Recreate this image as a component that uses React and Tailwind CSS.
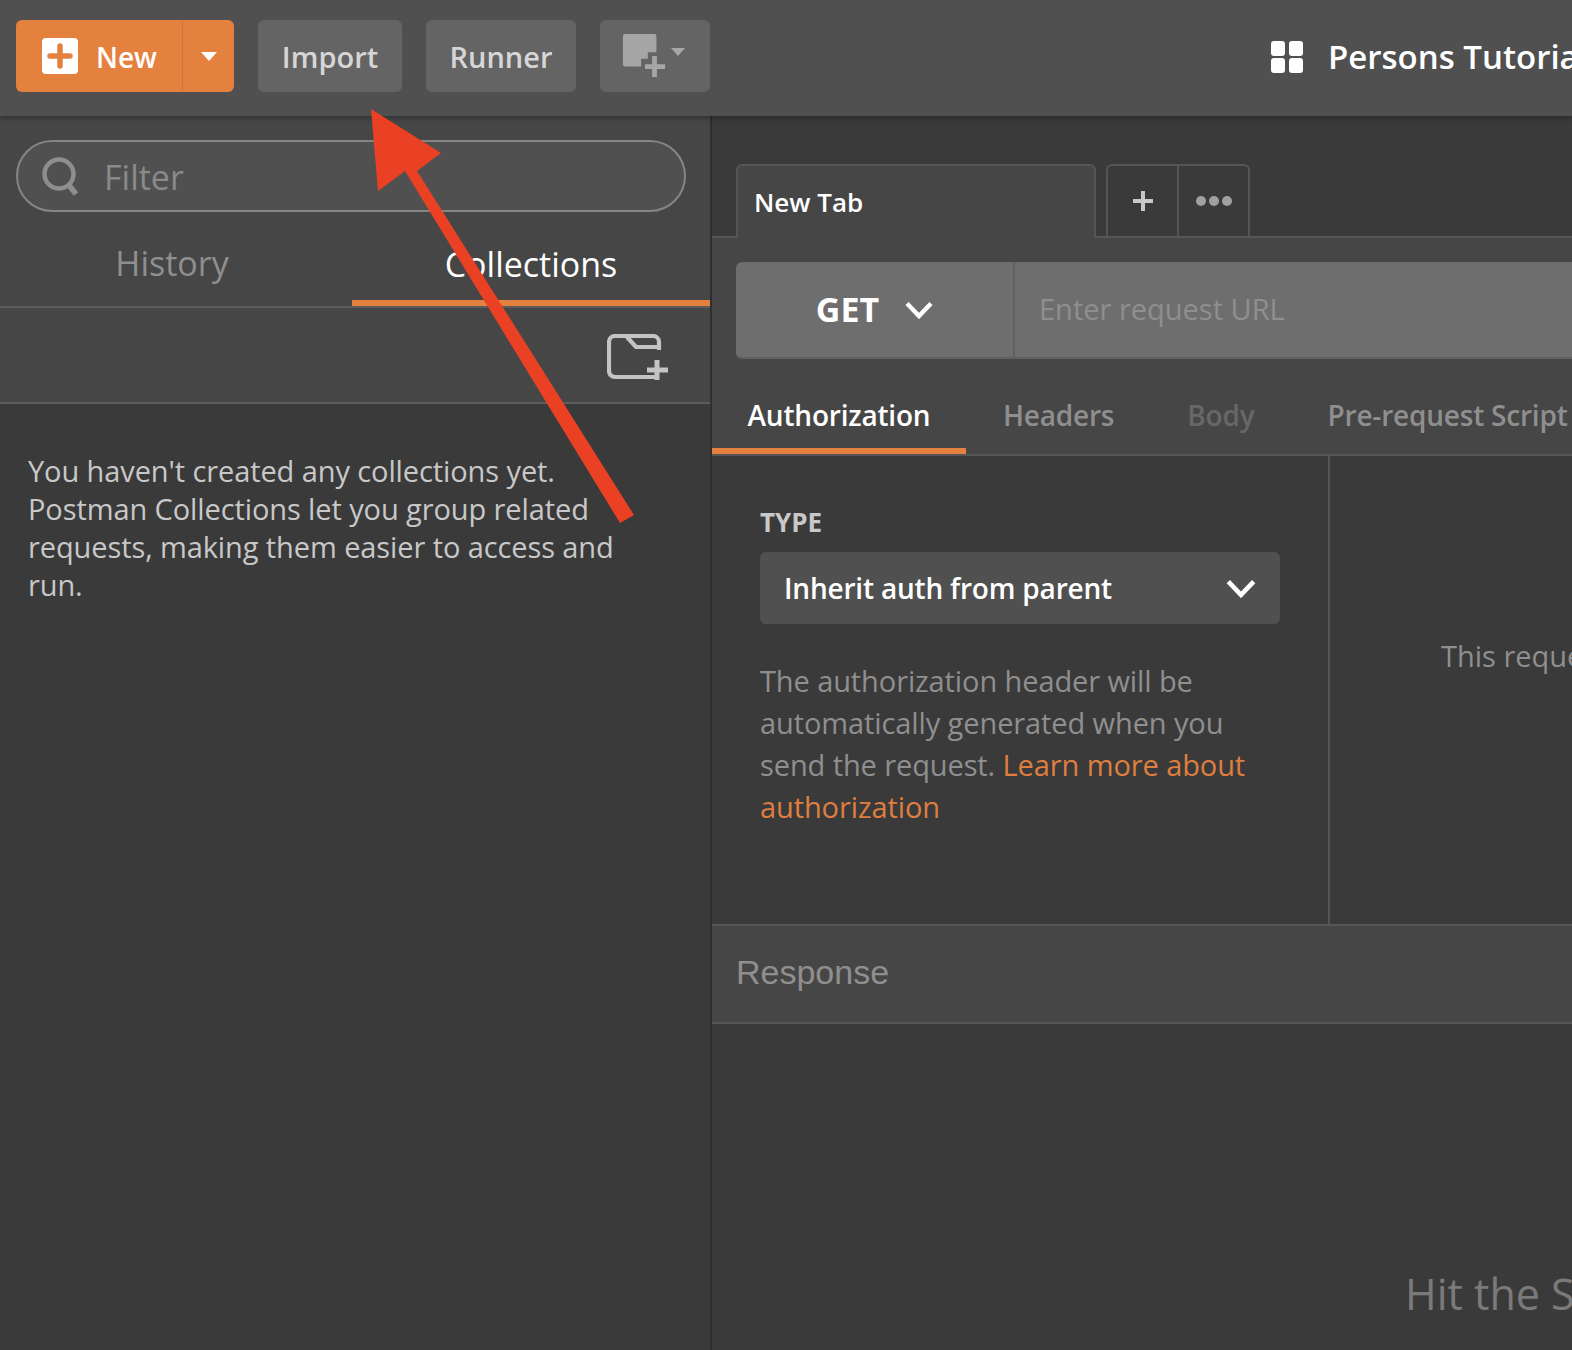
const sans = "font-['Open_Sans',sans-serif]";

const Chevron = ({ className }) => (
  <svg viewBox="0 0 28 18" fill="none" stroke="currentColor" strokeWidth="4.4" className={className}>
    <path d="M2 2.5 14 15 26 2.5" />
  </svg>
);

const Caret = ({ className }) => (
  <svg viewBox="0 0 16 9" fill="currentColor" className={className}>
    <path d="M0 0h16L8 9z" />
  </svg>
);

const PlusBox = () => (
  <svg viewBox="0 0 36 36" className="w-9 h-9">
    <rect width="36" height="36" rx="4" fill="#fff" />
    <path d="M18 8v20M8 18h20" stroke="#e5813f" strokeWidth="5.5" strokeLinecap="round" />
  </svg>
);

const NewWindowIcon = () => (
  <svg viewBox="0 0 46 46" className="w-[44px] h-[44px]">
    <path d="M1 2a2 2 0 0 1 2-2h31a2 2 0 0 1 2 2v17h-9v7h-7v8H3a2 2 0 0 1-2-2z" fill="#a6a6a6" />
    <path d="M34 23v22M24 34h21" stroke="#a6a6a6" strokeWidth="5" />
  </svg>
);

const FolderPlus = () => (
  <svg viewBox="0 0 62 46" fill="none" stroke="#c4c4c4" className="w-[62px] h-[46px]">
    <path d="M50 43H8a6 6 0 0 1-6-6V8a6 6 0 0 1 6-6h38a6 6 0 0 1 6 6v8" strokeWidth="4.2" />
    <path d="M20 3l9 10h22" strokeWidth="4.2" />
    <path d="M50 26v20M40 36h21" strokeWidth="5" />
  </svg>
);

const SearchIcon = () => (
  <svg viewBox="0 0 40 40" fill="none" stroke="#8e8e8e" className="w-10 h-10">
    <circle cx="18" cy="18" r="14.5" strokeWidth="4.5" />
    <path d="M27 28l8 10" strokeWidth="5.5" />
  </svg>
);

const WorkspaceIcon = () => (
  <div className="grid grid-cols-2 gap-x-1 gap-y-[2px] w-8 shrink-0">
    <span className="h-[15px] rounded-[3px] bg-white" />
    <span className="h-[15px] rounded-[3px] bg-white" />
    <span className="h-[15px] rounded-[3px] bg-white" />
    <span className="h-[15px] rounded-[3px] bg-white" />
  </div>
);

function ToolButton({ children, className = "" }) {
  return (
    <div className={`h-[72px] shrink-0 rounded-md bg-[#646464] flex items-center justify-center text-[29px] font-semibold text-[#d6d6d6] ${className}`}>
      {children}
    </div>
  );
}

function Header() {
  return (
    <header className="relative z-10 h-[116px] shrink-0 bg-[#505050] flex items-center pl-4 pb-1 overflow-hidden shadow-[0_2px_5px_rgba(0,0,0,0.3)]">
      <div className="w-[218px] h-[72px] rounded-md bg-[#e5813f] flex text-white shrink-0">
        <div className="w-[167px] pl-[26px] flex items-center gap-[18px] border-r border-[#d3743a]">
          <PlusBox />
          <span className="text-[28px] font-semibold pt-0.5">New</span>
        </div>
        <div className="flex-1 flex items-center justify-center">
          <Caret className="w-4 h-[9px]" />
        </div>
      </div>
      <ToolButton className="w-[144px] ml-6 pt-0.5">Import</ToolButton>
      <ToolButton className="w-[150px] ml-6 pt-0.5">Runner</ToolButton>
      <ToolButton className="w-[110px] ml-6 gap-[5px] items-start pt-[14px] pr-1">
        <NewWindowIcon />
        <Caret className="w-[14px] h-2 mt-[14px] text-[#a6a6a6]" />
      </ToolButton>
      <div className="ml-[561px] mt-0.5 flex items-center gap-[25px] shrink-0">
        <WorkspaceIcon />
        <span className="text-[33px] font-semibold text-white whitespace-nowrap">Persons Tutorial</span>
      </div>
    </header>
  );
}

function Sidebar() {
  return (
    <aside className="w-[712px] shrink-0 flex flex-col border-r-2 border-[#2f2f2f] bg-[#3a3a3a]">
      <div className="bg-[#464646]">
        <div className="pl-4 pr-6 pt-6">
          <div className="h-[72px] rounded-full border-2 border-[#858585] bg-[#505050] flex items-center pl-[23px] gap-[23px]">
            <SearchIcon />
            <span className="text-[34px] text-[#8a8a8a] pt-0.5">Filter</span>
          </div>
        </div>
        <div className="flex h-[96px] border-b-2 border-[#5c5c5c]">
          <div className="w-[352px] flex items-center justify-center text-[34px] text-[#8f8f8f] pt-2 pr-2">History</div>
          <div className="w-[358px] flex items-center justify-center text-[34px] text-white border-b-[6px] border-[#e5813f] pt-[16px]">Collections</div>
        </div>
        <div className="h-[96px] flex items-center justify-end pr-[41px] pt-1 border-b-2 border-[#5c5c5c]">
          <FolderPlus />
        </div>
      </div>
      <p className="pl-7 pr-[90px] pt-[48px] text-[29px] leading-[38px] tracking-[-0.1px] text-[#c8c8c8]">
        You haven't created any collections yet. Postman Collections let you group related requests, making them easier to access and run.
      </p>
    </aside>
  );
}

function TabStrip() {
  return (
    <div className="h-[122px] shrink-0 bg-[#3a3a3a] flex items-end pl-6 border-b-2 border-[#555555]">
      <div className="w-[360px] h-[74px] -mb-0.5 rounded-t-md border-2 border-b-0 border-[#555555] bg-[#464646] flex items-center pl-4 text-[26px] font-semibold text-white">
        New Tab
      </div>
      <div className="ml-[10px] h-[72px] flex rounded-t-md border-2 border-b-0 border-[#555555] text-[#c8c8c8]">
        <div className="w-[71px] flex items-center justify-center border-r-2 border-[#555555]">
          <svg viewBox="0 0 20 20" className="w-5 h-5"><path d="M10 0v20M0 10h20" stroke="#c8c8c8" strokeWidth="4" /></svg>
        </div>
        <div className="w-[69px] flex items-center justify-center gap-[3px]">
          <span className="w-[10px] h-[10px] rounded-full bg-[#a0a0a0]" />
          <span className="w-[10px] h-[10px] rounded-full bg-[#a0a0a0]" />
          <span className="w-[10px] h-[10px] rounded-full bg-[#a0a0a0]" />
        </div>
      </div>
    </div>
  );
}

function RequestBar() {
  return (
    <div className="pl-6 pt-[24px] pb-[22px]">
      <div className="h-[97px] w-[1000px] rounded-md bg-[#6e6e6e] flex border-b-2 border-[#606060]">
        <div className="w-[279px] flex items-center justify-center gap-[26px] border-r-2 border-[#606060] text-white">
          <span className="text-[34px] font-bold">GET</span>
          <Chevron className="w-[28px] h-[18px]" />
        </div>
        <div className="flex items-center pl-[24px] pb-0.5 text-[29px] text-[#8f8f8f]">Enter request URL</div>
      </div>
    </div>
  );
}

function RequestTabs() {
  return (
    <div className="h-[75px] shrink-0 flex items-stretch border-b-2 border-[#555555] text-[28px] font-semibold tracking-[-0.2px] whitespace-nowrap">
      <div className="w-[254px] shrink-0 flex items-center justify-center text-white border-b-[6px] border-[#e5813f]">Authorization</div>
      <div className="ml-[37px] flex items-center text-[#8f8f8f] pb-1.5">Headers</div>
      <div className="ml-[73px] flex items-center text-[#676767] pb-1.5">Body</div>
      <div className="ml-[73px] flex items-center text-[#8f8f8f] pb-1.5">Pre-request Script</div>
    </div>
  );
}

function AuthPanel() {
  return (
    <div className="h-[470px] shrink-0 flex bg-[#3a3a3a] border-b-2 border-[#555555]">
      <div className="w-[618px] shrink-0 pl-12 pr-12 pt-[50px] border-r-2 border-[#555555]">
        <div className="text-[26px] font-bold text-[#c8c8c8] leading-[32px]">TYPE</div>
        <div className="mt-[14px] h-[72px] w-[520px] rounded-md bg-[#505050] flex items-center justify-between pl-6 pr-[24px] text-white">
          <span className="text-[28px] font-semibold tracking-[-0.2px]">Inherit auth from parent</span>
          <Chevron className="w-[30px] h-[19px]" />
        </div>
        <p className="mt-[36px] w-[510px] text-[29px] leading-[42px] tracking-[-0.1px] text-[#8f8f8f]">
          The authorization header will be automatically generated when you send the request. <span className="text-[#df7e3f]">Learn more about authorization</span>
        </p>
      </div>
      <div className="pl-[111px] pt-[178px] text-[29px] text-[#8f8f8f] whitespace-nowrap">This request is not inheriting</div>
    </div>
  );
}

export default function App() {
  return (
    <div className={`relative w-[1572px] h-[1350px] overflow-hidden flex flex-col bg-[#3a3a3a] ${sans}`}>
      <Header />
      <div className="flex-1 flex min-h-0">
        <Sidebar />
        <main className="flex-1 min-w-0 flex flex-col overflow-hidden bg-[#464646]">
          <TabStrip />
          <RequestBar />
          <RequestTabs />
          <AuthPanel />
          <div className="h-[98px] shrink-0 flex items-center pl-6 pb-1 border-b-2 border-[#555555] text-[34px] text-[#8f8f8f] font-['Liberation_Sans',sans-serif]">Response</div>
          <div className="flex-1 bg-[#3a3a3a] pl-[693px] pt-[238px] text-[43px] text-[#7a7a7a] whitespace-nowrap">Hit the Send button to get a response.</div>
        </main>
      </div>
      {/* annotation arrow drawn on top of the screenshot */}
      <svg viewBox="0 0 1572 1350" className="absolute inset-0 z-20 w-[1572px] h-[1350px] pointer-events-none">
        <path d="M371 109 441 153 417 171 634 515 620 523 405 171 378 191z" fill="#ea4125" />
      </svg>
    </div>
  );
}
